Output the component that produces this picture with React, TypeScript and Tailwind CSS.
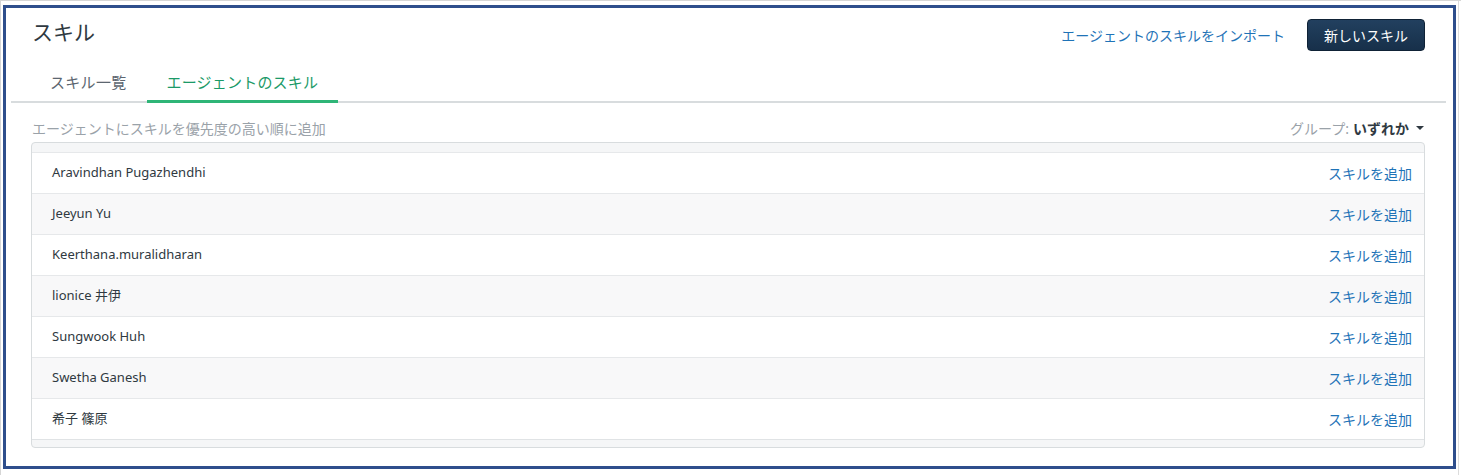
import React from 'react';

const agents = [
    'Aravindhan Pugazhendhi',
    'Jeeyun Yu',
    'Keerthana.muralidharan',
    'lionice 井伊',
    'Sungwook Huh',
    'Swetha Ganesh',
    '希子 篠原',
];

const font = { fontFamily: '"Noto Sans", "Noto Sans CJK JP", sans-serif' };

const App: React.FC = () => {
    return (
        <div className="flex items-start w-[1461px] h-[475px] bg-white border-t border-l border-[#d6d6d6]" style={font}>
            <div className="ml-[2px] mt-[4px] w-[1453px] h-[464px] border-[3px] border-[#2e4e8c] bg-white pl-[5px] pr-[7px]">
                {/* header */}
                <div className="flex items-start justify-between px-[21px] pt-[11px]">
                    <h1 className="text-[21px] leading-[26px] text-[#2f3941]">スキル</h1>
                    <div className="flex items-center gap-[22px]">
                        <a className="text-[14px] text-[#1f73b7] cursor-pointer">エージェントのスキルをインポート</a>
                        <button className="h-[32px] px-[16px] rounded-[4px] bg-gradient-to-b from-[#22405f] to-[#17304a] text-white text-[14px] border border-[#0f2236]">
                            新しいスキル
                        </button>
                    </div>
                </div>

                {/* tabs */}
                <div className="mt-[13px] flex px-[19px] border-b-2 border-[#d8dcde]">
                    <div className="h-[39px] -mb-[2px] px-[20px] flex items-center border-b-[3px] border-transparent text-[15px] tracking-[0.3px] text-[#5c6670]">
                        スキル一覧
                    </div>
                    <div className="h-[39px] -mb-[2px] px-[20px] flex items-center border-b-[3px] border-[#2eb577] text-[15px] tracking-[0.2px] text-[#1b9a68]">
                        エージェントのスキル
                    </div>
                </div>

                {/* toolbar */}
                <div className="mt-[15px] h-[20px] flex items-center justify-between px-[21px] text-[14px]">
                    <span className="text-[#9aa2a9]">エージェントにスキルを優先度の高い順に追加</span>
                    <div className="flex items-center mr-[1px]">
                        <span className="text-[#9aa2a9]">グループ:</span>
                        <span className="ml-[4px] font-bold text-[#2f3941]">いずれか</span>
                        <span className="ml-[7px] w-0 h-0 border-l-[4px] border-r-[4px] border-t-[4px] border-l-transparent border-r-transparent border-t-[#2f3941]" />
                    </div>
                </div>

                {/* list */}
                <div className="mt-[4px] ml-[20px] mr-[21px] border border-[#d8dcde] rounded-[4px] overflow-hidden bg-[#f5f6f7]">
                    <div className="h-[9px]" />
                    {agents.map((name, i) => (
                        <div
                            key={name}
                            className={`h-[41px] flex items-center justify-between pl-[20px] pr-[12px] border-t border-[#e6e8ea] ${i % 2 === 0 ? 'bg-white' : 'bg-[#f8f8f9]'}`}
                        >
                            <span className="text-[13px] text-[#2f3941]">{name}</span>
                            <a className="text-[14px] text-[#1f73b7] cursor-pointer">スキルを追加</a>
                        </div>
                    ))}
                    <div className="h-[8px] border-t border-[#e0e3e5]" />
                </div>
            </div>
            <div className="ml-[2px] w-[1px] h-full bg-[#dcdcdc]" />
        </div>
    );
};

export default App;
